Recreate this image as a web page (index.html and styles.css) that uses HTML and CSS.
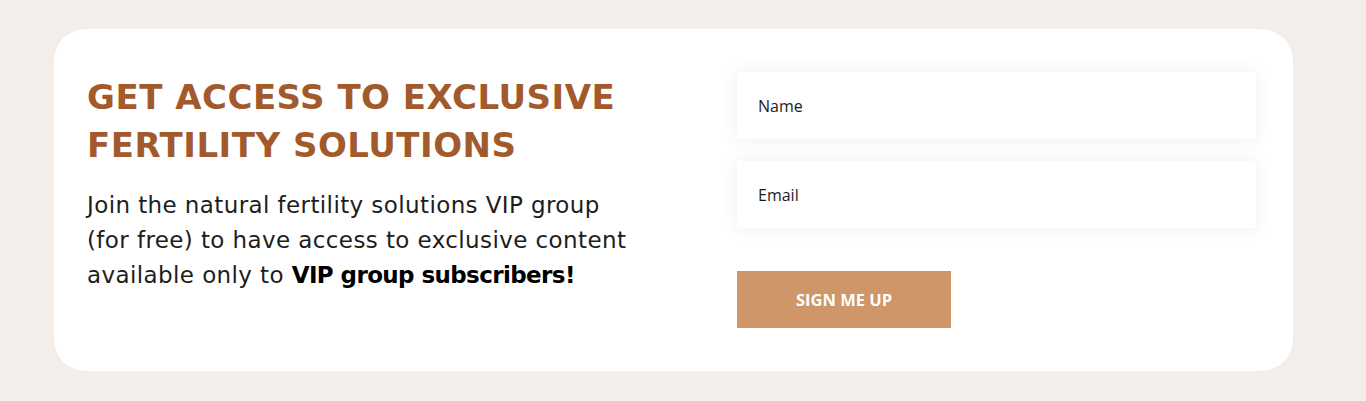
FILE: index.html
```html
<!DOCTYPE html>
<html lang="en">

<head>
    <title>VIP Group</title>
    <link rel="stylesheet" href="styles.css">
</head>

<body>
    <div class="vip-card">
        <div class="vip-text">
            <h2 class="vip-heading">GET ACCESS TO EXCLUSIVE FERTILITY SOLUTIONS</h2>
            <p class="vip-intro">Join the natural fertility solutions VIP group (for free) to have access to exclusive content available only to <b>VIP group subscribers!</b></p>
        </div>

        <form class="vip-form">
            <input type="text" class="vip-field" placeholder="Name">
            <input type="email" class="vip-field" placeholder="Email">
            <button type="button" class="vip-button">SIGN ME UP</button>
        </form>
    </div>
</body>

</html>
```

FILE: styles.css
```css
body {
    background-color: #f3eee9;
    margin: 0;
    padding: 29px 73px 30px 54px;
    font-family: "DejaVu Sans", Verdana, sans-serif;
}

/* White rounded card holding both columns */
.vip-card {
    background-color: #ffffff;
    border-radius: 32px;
    display: grid;
    grid-template-columns: 550px 519px;
    column-gap: 100px;
    padding: 43px 37px 43px 33px;
    height: 256px;
}

.vip-heading {
    color: #a25a2c;
    font-size: 34px;
    font-weight: bold;
    letter-spacing: 0.5px;
    line-height: 48px;
    margin: 0;
    padding-top: 1px;
}

.vip-intro {
    color: #1d1d1d;
    font-size: 23px;
    letter-spacing: 0.4px;
    line-height: 35px;
    margin: 19px 0 0 0;
}

.vip-intro b {
    color: #000000;
    letter-spacing: -0.6px;
}

.vip-form {
    display: flex;
    flex-direction: column;
    align-items: flex-start;
}

.vip-field {
    box-sizing: border-box;
    width: 100%;
    height: 67px;
    border: none;
    background-color: #ffffff;
    box-shadow: 0 0 18px rgba(0, 0, 0, 0.07);
    padding: 0 21px;
    margin-bottom: 22px;
    font-family: "Open Sans", sans-serif;
    font-size: 16px;
    outline: none;
}

.vip-field::placeholder {
    color: #1c1c1c;
    opacity: 1;
}

.vip-button {
    margin-top: 21px;
    width: 214px;
    height: 57px;
    border: none;
    background-color: #cf9669;
    color: #ffffff;
    font-family: "Open Sans", sans-serif;
    font-weight: bold;
    font-size: 16.5px;
    cursor: pointer;
}
```
